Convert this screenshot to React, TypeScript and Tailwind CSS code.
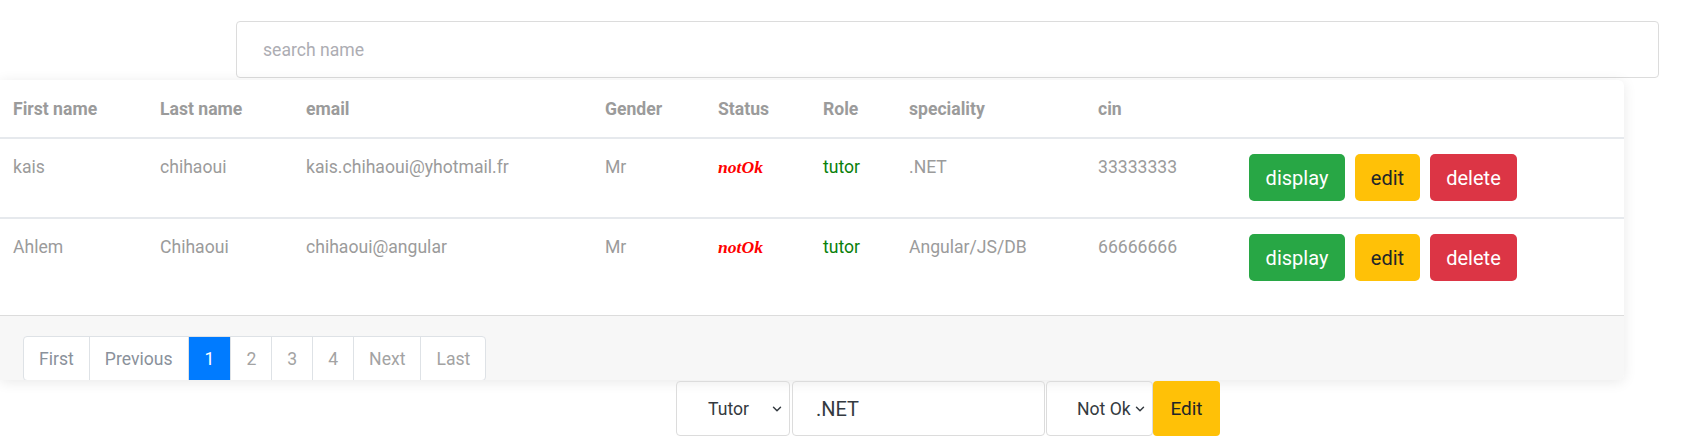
import { ChevronDown } from "lucide-react";

type User = {
  first: string;
  last: string;
  email: string;
  gender: string;
  status: string;
  role: string;
  speciality: string;
  cin: string;
};

const users: User[] = [
  { first: "kais", last: "chihaoui", email: "kais.chihaoui@yhotmail.fr", gender: "Mr", status: "notOk", role: "tutor", speciality: ".NET", cin: "33333333" },
  { first: "Ahlem", last: "Chihaoui", email: "chihaoui@angular", gender: "Mr", status: "notOk", role: "tutor", speciality: "Angular/JS/DB", cin: "66666666" },
];

const cols = "grid grid-cols-[147px_146px_299px_113px_105px_86px_189px_151px_388px]";

const Pager = () => {
  const items = [
    { label: "First", muted: true },
    { label: "Previous", muted: true },
    { label: "1", active: true },
    { label: "2" },
    { label: "3" },
    { label: "4" },
    { label: "Next" },
    { label: "Last" },
  ];
  return (
    <div className="flex h-[45px] border border-[#dee2e6] rounded-[4px] overflow-hidden bg-white">
      {items.map((it, i) => (
        <div
          key={it.label}
          className={
            "flex items-center px-[15px] " +
            (i > 0 ? "border-l border-[#dee2e6] " : "") +
            (it.active ? "bg-[#007bff] text-white border-[#007bff] px-[16px]" : it.muted ? "text-[#8a919b]" : "text-[#a3a3a3]")
          }
        >
          {it.label}
        </div>
      ))}
    </div>
  );
};

export default function App() {
  return (
    <div className="bg-white min-h-[447px] font-['Roboto',sans-serif] text-[17.6px] leading-[26px]">
      <div className="pt-[21px] pl-[236px]">
        <div className="w-[1423px] h-[57px] border border-[#dcdcdc] rounded-[4px] flex items-center pl-[26px] text-[#adadb3]">
          search name
        </div>
      </div>

      <div className="mt-[2px] w-[1624px] bg-white rounded-r-[6px] shadow-[0_2px_14px_rgba(0,0,0,0.09)] overflow-hidden">
        <div className={cols + " h-[59px] items-center border-b-2 border-[#e6e9ed] font-bold text-[#9b9b9b]"}>
          <div className="pl-[13px]">First name</div>
          <div className="pl-[13px]">Last name</div>
          <div className="pl-[13px]">email</div>
          <div className="pl-[13px]">Gender</div>
          <div className="pl-[13px]">Status</div>
          <div className="pl-[13px]">Role</div>
          <div className="pl-[13px]">speciality</div>
          <div className="pl-[13px]">cin</div>
          <div></div>
        </div>

        {users.map((u, i) => (
          <div
            key={u.cin}
            className={cols + " pt-[15px] pb-[16px] text-[#9b9b9b] " + (i === 0 ? "border-b-2 border-[#e6e9ed]" : "")}
          >
            <div className="pl-[13px]">{u.first}</div>
            <div className="pl-[13px]">{u.last}</div>
            <div className="pl-[13px]">{u.email}</div>
            <div className="pl-[13px]">{u.gender}</div>
            <div className="pl-[13px] font-['Liberation_Serif',serif] font-bold italic text-[#ff0000]">{u.status}</div>
            <div className="pl-[13px] text-[#0a800a]">{u.role}</div>
            <div className="pl-[13px]">{u.speciality}</div>
            <div className="pl-[13px]">{u.cin}</div>
            <div className="pl-[13px] flex gap-[10px] text-[20px]">
              <button className="w-[96px] h-[47px] rounded-[5px] bg-[#28a745] text-white">display</button>
              <button className="w-[65px] h-[47px] rounded-[5px] bg-[#ffc107] text-[#212529]">edit</button>
              <button className="w-[87px] h-[47px] rounded-[5px] bg-[#dc3545] text-white">delete</button>
            </div>
          </div>
        ))}

        <div className="h-[18px]"></div>
        <div className="border-t border-[#dcdcdc] bg-[#f7f7f7] pt-[20px] pl-[23px] h-[65px]">
          <div className="flex">
            <Pager />
          </div>
        </div>
      </div>

      <div className="mt-[1px] pl-[676px] flex h-[55px]">
        <div className="w-[114px] border border-[#dcdcdc] rounded-[4px] flex items-center justify-between pl-[31px] pr-[5px] text-[#343a40]">
          <span>Tutor</span>
          <ChevronDown size={14} strokeWidth={2.5} />
        </div>
        <div className="ml-[2px] w-[253px] border border-[#dcdcdc] rounded-[4px] flex items-center pl-[23px] text-[20px] text-[#343a40]">
          .NET
        </div>
        <div className="ml-[1px] w-[107px] border border-[#dcdcdc] rounded-[4px] flex items-center justify-between pl-[30px] pr-[5px] text-[#343a40]">
          <span>Not Ok</span>
          <ChevronDown size={14} strokeWidth={2.5} />
        </div>
        <button className="w-[67px] rounded-[4px] bg-[#ffc107] text-[#212529] text-[19px]">Edit</button>
      </div>
    </div>
  );
}
